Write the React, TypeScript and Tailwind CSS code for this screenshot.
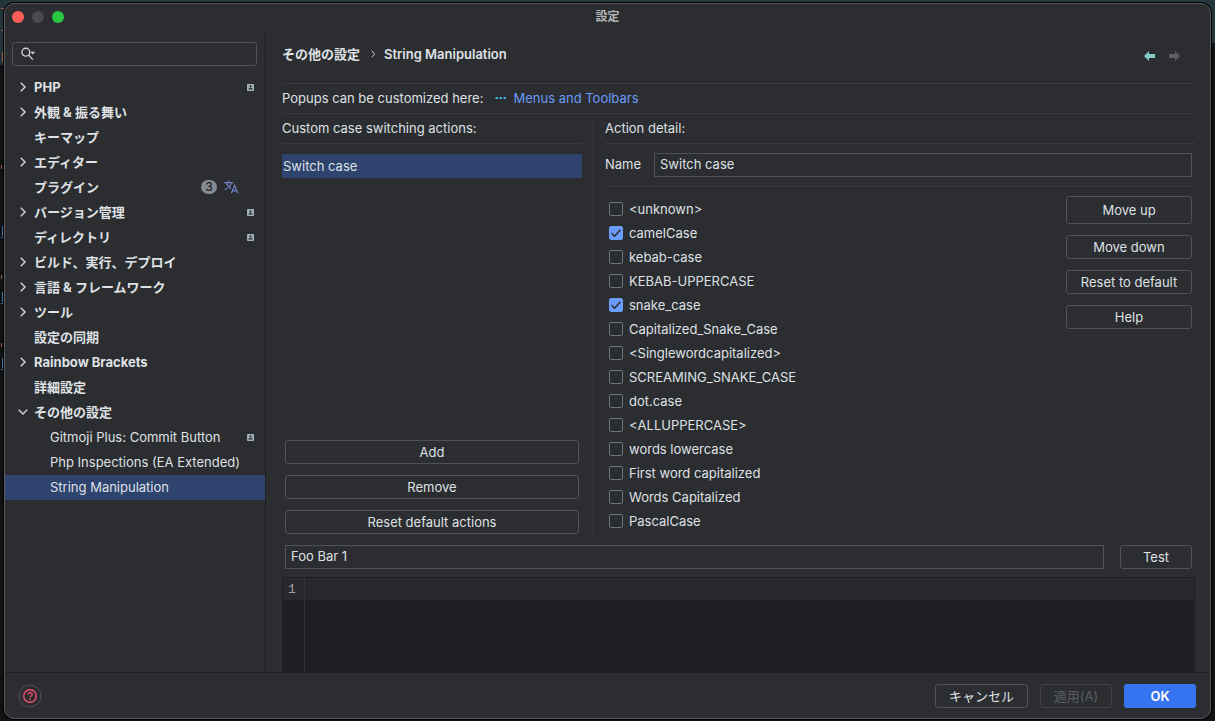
import { useState } from 'react';
import type { ReactNode } from 'react';

type TreeItem = {
  label: string;
  arrow?: 'right' | 'down';
  child?: boolean;
  project?: boolean;
  updates?: number;
};

const treeItems: TreeItem[] = [
  { label: 'PHP', arrow: 'right', project: true },
  { label: '外観 & 振る舞い', arrow: 'right' },
  { label: 'キーマップ' },
  { label: 'エディター', arrow: 'right' },
  { label: 'プラグイン', updates: 3 },
  { label: 'バージョン管理', arrow: 'right', project: true },
  { label: 'ディレクトリ', project: true },
  { label: 'ビルド、実行、デプロイ', arrow: 'right' },
  { label: '言語 & フレームワーク', arrow: 'right' },
  { label: 'ツール', arrow: 'right' },
  { label: '設定の同期' },
  { label: 'Rainbow Brackets', arrow: 'right' },
  { label: '詳細設定' },
  { label: 'その他の設定', arrow: 'down' },
  { label: 'Gitmoji Plus: Commit Button', child: true, project: true },
  { label: 'Php Inspections (EA Extended)', child: true },
  { label: 'String Manipulation', child: true },
];

const caseItems = [
  '<unknown>',
  'camelCase',
  'kebab-case',
  'KEBAB-UPPERCASE',
  'snake_case',
  'Capitalized_Snake_Case',
  '<Singlewordcapitalized>',
  'SCREAMING_SNAKE_CASE',
  'dot.case',
  '<ALLUPPERCASE>',
  'words lowercase',
  'First word capitalized',
  'Words Capitalized',
  'PascalCase',
];

function Arrow({ dir }: { dir: 'right' | 'down' }) {
  return (
    <svg viewBox="0 0 16 16" className="h-4 w-4" fill="none" stroke="#ced0d6" strokeWidth="1.5">
      {dir === 'right' ? <path d="M5.8 3.8 10 8l-4.2 4.2" /> : <path d="M3.8 5.8 8 10l4.2-4.2" />}
    </svg>
  );
}

function ProjectIcon() {
  return (
    <svg viewBox="0 0 7 7" className="h-[7px] w-[7px]">
      <rect width="7" height="7" rx="0.8" fill="#9fb0b8" />
      <circle cx="3.5" cy="2.4" r="1.1" fill="#2b2d30" />
      <path d="M1.3 5.6c0-2 4.4-2 4.4 0z" fill="#2b2d30" />
    </svg>
  );
}

function TranslateIcon() {
  return (
    <svg viewBox="0 0 16 16" className="h-4 w-4" fill="none" stroke="#6f80cc" strokeWidth="1.2">
      <path d="M1.2 3.6h9M5.7 1.8v1.8M8.4 3.6C7.6 6.6 5 9.2 1.6 10.8M3.2 3.8c.8 2.6 2.6 4.6 4.8 5.8" />
      <path d="M8.4 14.2 11.6 6.6l3.2 7.6M9.5 11.8h4.2" />
    </svg>
  );
}

function Button({ children, className = '', disabled }: { children: ReactNode; className?: string; disabled?: boolean }) {
  return (
    <button
      type="button"
      disabled={disabled}
      className={`flex items-center justify-center rounded-[3px] border border-[#4e5157] disabled:border-[#3e4044] disabled:text-[#5a5d63] ${className}`}
    >
      {children}
    </button>
  );
}

function TreeRow({ item, selected, onSelect }: { item: TreeItem; selected: boolean; onSelect: () => void }) {
  return (
    <li>
      <button
        type="button"
        onClick={onSelect}
        className={`flex h-[25px] w-full items-center pr-[11px] pb-px text-left ${
          item.child ? 'pl-[45px]' : 'pl-[10px] font-bold'
        } ${selected ? 'bg-[#2e436e]' : ''}`}
      >
        {!item.child && <span className="mr-[3px] h-4 w-4 shrink-0">{item.arrow && <Arrow dir={item.arrow} />}</span>}
        <span className="flex-1 whitespace-nowrap">{item.label}</span>
        {item.updates && (
          <span className="mr-[15px] flex items-center gap-[6px]">
            <span className="flex h-[14px] w-4 items-center justify-center rounded-full bg-[#868a91] text-[12px] font-medium text-[#1e1f22]">
              {item.updates}
            </span>
            <TranslateIcon />
          </span>
        )}
        {item.project && <ProjectIcon />}
      </button>
    </li>
  );
}

function Sidebar() {
  const [selected, setSelected] = useState('String Manipulation');
  return (
    <aside className="w-[261px] shrink-0 border-r border-[#1e1f22]">
      <div className="mt-[10px] mr-2 mb-[9px] ml-[7px] flex h-6 items-center rounded-[3px] border border-[#4e5157] pl-2">
        <svg viewBox="0 0 16 14" className="h-[14px] w-4 shrink-0" fill="none" stroke="#ced0d6" strokeWidth="1.4">
          <circle cx="4.8" cy="5.2" r="3.9" />
          <path d="m7.6 8 4.2 4.6" />
          <path d="M9.2 4.8h5l-2.5 2.6z" fill="#ced0d6" stroke="none" />
        </svg>
        <input aria-label="設定を検索" className="min-w-0 flex-1 bg-transparent px-1 outline-none" />
      </div>
      <ul>
        {treeItems.map((item) => (
          <TreeRow
            key={item.label}
            item={item}
            selected={item.label === selected}
            onSelect={() => setSelected(item.label)}
          />
        ))}
      </ul>
    </aside>
  );
}

function CaseRow({ label, checked, onChange }: { label: string; checked: boolean; onChange: () => void }) {
  return (
    <label className="flex h-6 items-center gap-[6px]">
      <span className="relative h-[14px] w-[14px]">
        <input
          type="checkbox"
          checked={checked}
          onChange={onChange}
          className="block h-[14px] w-[14px] appearance-none rounded-[2px] border border-[#6f737a] checked:border-[#6b9bfa] checked:bg-[#6b9bfa]"
        />
        {checked && (
          <svg viewBox="0 0 14 14" className="pointer-events-none absolute inset-0" fill="none" stroke="#2b2d30" strokeWidth="1.5">
            <path d="m2.6 7.200 3 3 5.800-6.400" />
          </svg>
        )}
      </span>
      <span>{label}</span>
    </label>
  );
}

function ActionList() {
  return (
    <section className="flex w-[300px] shrink-0 flex-col">
      <h2 className="flex h-[30px] items-center border-b border-[#393b40] pb-px">Custom case switching actions:</h2>
      <ul className="mt-[10px] flex-1">
        <li className="flex h-6 items-center bg-[#2e436e] pl-px">Switch case</li>
      </ul>
      <div className="mx-[3px] mb-[2px] flex flex-col gap-[11px]">
        <Button className="h-6">Add</Button>
        <Button className="h-6">Remove</Button>
        <Button className="h-6">Reset default actions</Button>
      </div>
    </section>
  );
}

function ActionDetail() {
  const [name, setName] = useState('Switch case');
  const [checked, setChecked] = useState(['camelCase', 'snake_case']);

  const toggle = (label: string) =>
    setChecked((prev) => (prev.includes(label) ? prev.filter((l) => l !== label) : [...prev, label]));

  return (
    <section className="flex-1">
      <h2 className="flex h-[30px] items-center border-b border-[#393b40] pb-px">Action detail:</h2>
      <div className="flex items-center border-b border-[#393b40] py-[9px] pr-[3px]">
        <label htmlFor="action-name" className="w-[49px] pb-[2px]">
          Name
        </label>
        <input
          id="action-name"
          value={name}
          onChange={(e) => setName(e.target.value)}
          className="h-6 min-w-0 flex-1 border border-[#4e5157] bg-transparent px-[5px] pb-[2px] outline-none"
        />
      </div>
      <div className="flex justify-between pt-[9px] pr-[3px] pb-[3px] pl-1">
        <div className="pt-px">
          {caseItems.map((label) => (
            <CaseRow key={label} label={label} checked={checked.includes(label)} onChange={() => toggle(label)} />
          ))}
        </div>
        <div className="flex w-[126px] flex-col gap-[11px]">
          <Button className="h-7">Move up</Button>
          <Button className="h-6">Move down</Button>
          <Button className="h-6">Reset to default</Button>
          <Button className="h-6">Help</Button>
        </div>
      </div>
    </section>
  );
}

function Content() {
  const [sample, setSample] = useState('Foo Bar 1');
  return (
    <main className="flex min-w-0 flex-1 flex-col pr-[15px] pl-4">
      <div className="flex h-[52px] items-center border-b border-[#393b40] pb-2 font-semibold">
        <span>その他の設定</span>
        <svg viewBox="0 0 6 10" className="mr-2 ml-[11px] h-2 w-[5px]" fill="none" stroke="#ced0d6" strokeWidth="1.2">
          <path d="m1 1 3.4 4L1 9" />
        </svg>
        <h1 className="flex-1">String Manipulation</h1>
        <div className="flex gap-[14px] pt-1 pr-[15px]">
          <button type="button" aria-label="戻る">
            <svg viewBox="0 0 11 10" className="h-[10px] w-[11px]" fill="#80cbc4">
              <path d="M0 5 5 0v3h6v4H5v3z" />
            </svg>
          </button>
          <button type="button" aria-label="進む" disabled>
            <svg viewBox="0 0 11 10" className="h-[10px] w-[11px]" fill="#5c5d5f">
              <path d="M11 5 6 0v3H0v4h6v3z" />
            </svg>
          </button>
        </div>
      </div>
      <div className="flex h-[30px] items-center border-b border-[#393b40] pb-px">
        <span>Popups can be customized here:</span>
        <svg viewBox="0 0 12 2" className="mr-[6px] ml-3 h-[2px] w-3" fill="#40b6e0">
          <rect x="0.5" width="2.400" height="2" />
          <rect x="4.500" width="2.400" height="2" />
          <rect x="8.500" width="2.400" height="2" />
        </svg>
        <a href="#menus" className="text-[#6b9bfa]">
          Menus and Toolbars
        </a>
      </div>
      <div className="flex">
        <ActionList />
        <div className="mx-[11px] mt-[6px] w-px bg-[#393b40]" />
        <ActionDetail />
      </div>
      <div className="mt-[9px] mb-2 flex gap-4 px-[3px]">
        <input
          aria-label="テスト文字列"
          value={sample}
          onChange={(e) => setSample(e.target.value)}
          className="h-6 min-w-0 flex-1 border border-[#4e5157] bg-transparent px-[5px] pb-[2px] outline-none"
        />
        <Button className="h-6 w-[72px]">Test</Button>
      </div>
      <div className="flex min-h-[95px] flex-1 border border-b-0 border-[#1e1f22] bg-[#1e1f22]">
        <div className="w-[22px] border-r border-[#313438]">
          <div className="h-[22px] bg-[#26282e] pl-[5px] font-['Liberation_Mono'] leading-[24px] text-[#a1a3ab]">1</div>
        </div>
        <div className="flex-1">
          <div className="h-[22px] bg-[#26282e]" />
        </div>
      </div>
    </main>
  );
}

// slivers of the editor that show along the left edge, behind the dialog
function EditorBehind() {
  return (
    <svg viewBox="0 0 4 400" className="absolute top-0 left-0 h-[400px] w-1" aria-hidden="true">
      <path d="M0 0h4v65H0z" fill="#22343a" />
      <path d="M1 8h3v1H1zM1 30h3v1H1zM2 52h2v10H2zM1 165h1v4H1zM3 163h1v6H3zM1 275h1v4H1zM3 273h1v6H3zM1 343h1v4H1zM3 341h1v6H3z" fill="#9a5f43" />
      <path d="M2 226h1v10H2zM1 237h3v1H1zM2 292h1v10H2zM1 303h3v1H1zM2 358h1v10H2zM1 369h3v1H1z" fill="#3d74a8" />
    </svg>
  );
}

export default function App() {
  return (
    <div className="relative flex min-h-screen flex-col bg-[linear-gradient(#24383e_43px,#101113_43px)] px-1 pt-[3px] pb-[2px] font-[Inter,'Noto_Sans_CJK_JP',sans-serif] text-[13px] leading-4 text-[#dfe1e5]">
      <EditorBehind />
      <div className="relative flex flex-1 flex-col overflow-hidden rounded-[10px] border border-[#5a5b5d] bg-[#2b2d30] ring-1 ring-black">
        <header className="flex h-7 items-center px-[7px] pb-[2px]">
          <div className="flex flex-1 gap-2">
            <button type="button" aria-label="閉じる" className="h-3 w-3 rounded-full bg-[#ff5f57]" />
            <button type="button" aria-label="最小化" disabled className="h-3 w-3 rounded-full bg-[#4a4b4e]" />
            <button type="button" aria-label="拡大" className="h-3 w-3 rounded-full bg-[#28c840]" />
          </div>
          <span className="text-[12px] font-bold text-[#b4b5b7]">設定</span>
          <div className="flex-1" />
        </header>
        <div className="flex flex-1">
          <Sidebar />
          <Content />
        </div>
        <footer className="flex h-[46px] items-center gap-3 border-t border-[#1e1f22] pr-[14px] pl-[13px]">
          <button type="button" aria-label="ヘルプ" className="mr-auto">
            <svg viewBox="0 0 24 24" className="h-6 w-6" fill="none">
              <circle cx="12" cy="12" r="11" stroke="#4e5157" />
              <circle cx="12" cy="12" r="6.3" stroke="#f0506e" strokeWidth="1.4" />
              <path d="M10 10.7c0-2.7 4.2-2.6 4.2 0 0 1.4-2.1 1.4-2.1 2.9M12.1 14.6v1.3" stroke="#f0506e" strokeWidth="1.2" />
            </svg>
          </button>
          <Button className="h-6 w-[93px]">キャンセル</Button>
          <Button className="h-6 w-[72px]" disabled>
            適用(A)
          </Button>
          <button type="button" className="h-6 w-[72px] rounded-[3px] bg-[#3574f0] font-semibold text-white">
            OK
          </button>
        </footer>
      </div>
    </div>
  );
}
